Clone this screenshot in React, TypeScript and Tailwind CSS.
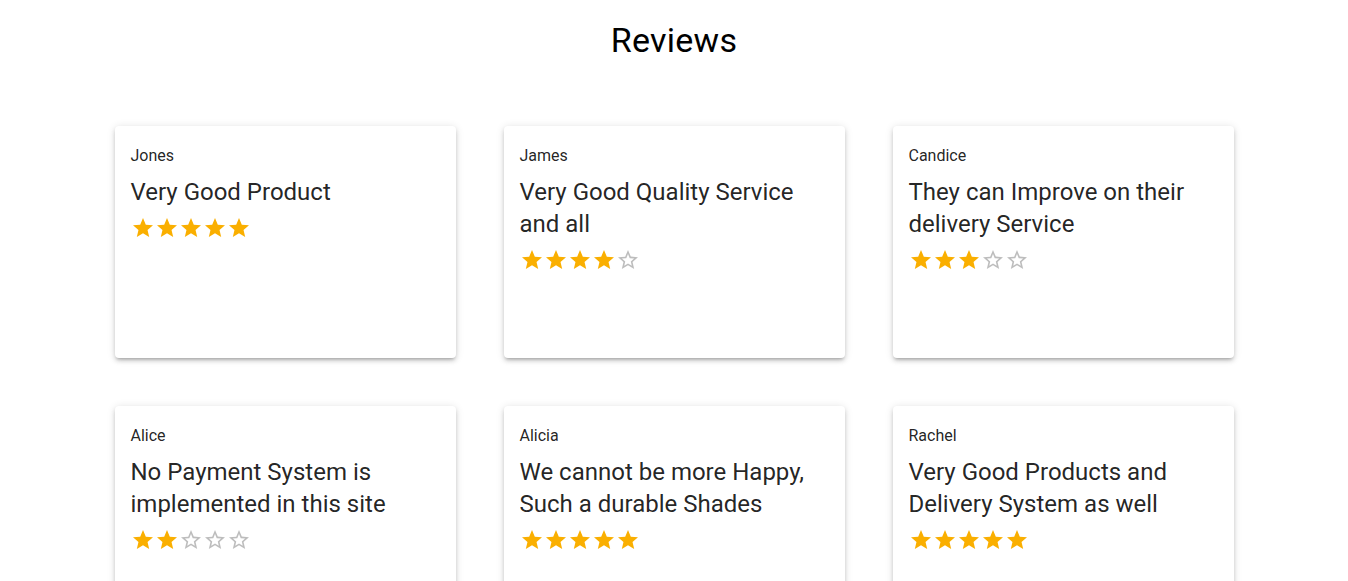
const reviews = [
  { name: "Jones", text: "Very Good Product", rating: 5 },
  { name: "James", text: "Very Good Quality Service and all", rating: 4 },
  { name: "Candice", text: "They can Improve on their delivery Service", rating: 3 },
  { name: "Alice", text: "No Payment System is implemented in this site", rating: 2 },
  { name: "Alicia", text: "We cannot be more Happy, Such a durable Shades", rating: 5 },
  { name: "Rachel", text: "Very Good Products and Delivery System as well", rating: 5 },
];

function Star({ filled }: { filled: boolean }) {
  return (
    <svg viewBox="0 0 24 24" className="w-6 h-6" fill={filled ? "#faaf00" : "rgba(0,0,0,0.26)"}>
      {filled ? (
        <path d="M12 17.27 18.18 21l-1.64-7.03L22 9.24l-7.19-.61L12 2 9.19 8.63 2 9.24l5.46 4.73L5.82 21z" />
      ) : (
        <path d="m22 9.24-7.19-.62L12 2 9.19 8.63 2 9.24l5.46 4.73L5.82 21 12 17.27 18.18 21l-1.63-7.03L22 9.24zM12 15.4l-3.76 2.27 1-4.28-3.32-2.88 4.38-.38L12 6.1l1.71 4.04 4.38.38-3.32 2.88 1 4.28L12 15.4z" />
      )}
    </svg>
  );
}

export default function App() {
  return (
    <div className="min-h-screen bg-white text-[rgba(0,0,0,0.87)]" style={{ fontFamily: "Roboto, 'Liberation Sans', sans-serif" }}>
      <h1 className="text-center text-black text-[34px] leading-[42px] font-normal pt-[19px] tracking-[0.25px]">Reviews</h1>
      <div className="w-[1119px] mx-auto mt-[65px] grid grid-cols-3 gap-x-12 gap-y-12">
        {reviews.map((r, i) => (
          <div
            key={i}
            className="h-[232px] bg-white rounded-[4px] px-4 pt-[18px] shadow-[0px_3px_3px_-2px_rgba(0,0,0,0.2),0px_3px_4px_0px_rgba(0,0,0,0.14),0px_1px_8px_0px_rgba(0,0,0,0.12)]"
          >
            <p className="text-[16px] leading-[24px] mb-[8px]">{r.name}</p>
            <div className="text-[24px] leading-[32px] pr-6">{r.text}</div>
            <div className="flex mt-2">
              {[1, 2, 3, 4, 5].map((n) => (
                <Star key={n} filled={n <= r.rating} />
              ))}
            </div>
          </div>
        ))}
      </div>
    </div>
  );
}
